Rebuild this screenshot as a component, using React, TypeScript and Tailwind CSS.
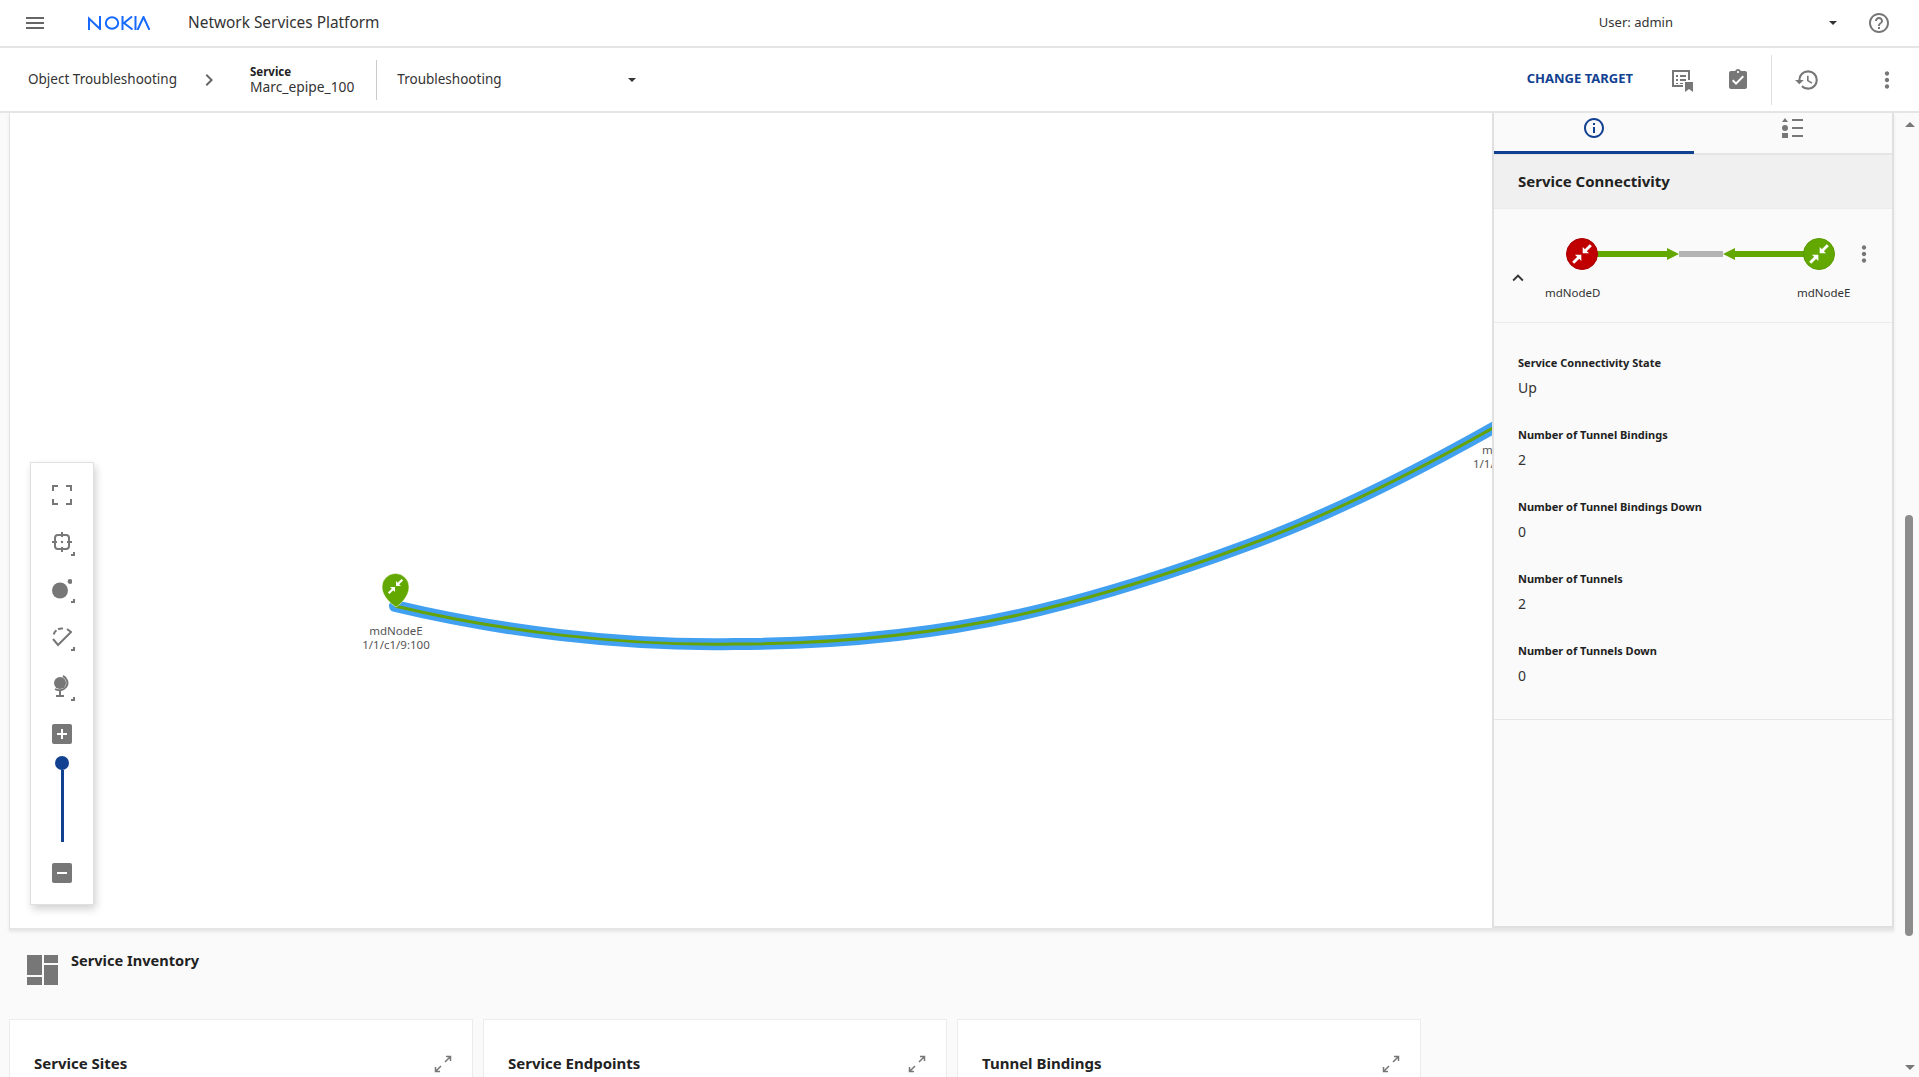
import { MdAssignmentTurnedIn, MdHelpOutline, MdHistory, MdInfoOutline, MdMoreVert, MdMenu, MdExpandLess, MdChevronRight } from "react-icons/md";

const font = { fontFamily: '"Noto Sans", sans-serif' };

const linkPath = "M385 493 C 490 518, 610 533, 724 531 C 826 531, 928 522, 1030 497 C 1100 480, 1168 458, 1238 432 C 1320 402, 1400 362, 1490 311";

function Caret({ className = "" }: { className?: string }) {
    return <span className={`w-0 h-0 border-x-[4px] border-x-transparent border-t-[4px] border-t-[#333] ${className}`} />;
}

function NokiaLogo() {
    return (
        <svg width="62" height="14" viewBox="0 0 62 14" fill="none" stroke="#1769ff" strokeWidth="2">
            <path d="M1 14V2.5L12 13V0" />
            <ellipse cx="24" cy="7" rx="6.2" ry="5.8" />
            <path d="M34.5 0v14M44 0.5L36 7l8.5 6.5" />
            <path d="M47.5 0v14" />
            <path d="M49.5 14L55.5 1l6 13" />
        </svg>
    );
}

function ConnectArrows({ size = 20 }: { size?: number }) {
    return (
        <svg width={size} height={size} viewBox="0 0 20 20" fill="none">
            <path d="M18 2l-6 6" stroke="#fff" strokeWidth="2.6" />
            <path d="M10.6 3.6v5.8h5.8z" fill="#fff" />
            <path d="M2 18l6-6" stroke="#fff" strokeWidth="2.6" />
            <path d="M9.4 16.4v-5.8H3.6z" fill="#fff" />
        </svg>
    );
}

function Corner() {
    return <span className="absolute right-[-3px] bottom-[-4px] w-[4px] h-[4px] border-r-2 border-b-2 border-[#777]" />;
}

function MapControls() {
    return (
        <div className="absolute left-[20px] top-[349px] w-[64px] h-[443px] bg-white border border-[#e0e0e0] shadow-[2px_4px_8px_rgba(0,0,0,0.18)] flex flex-col items-center pt-[22px]">
            <svg width="20" height="20" viewBox="0 0 20 20" fill="none" stroke="#777" strokeWidth="2">
                <path d="M1 6V1h5M14 1h5v5M19 14v5h-5M6 19H1v-5" />
            </svg>
            <div className="relative mt-[27px]">
                <svg width="20" height="20" viewBox="0 0 20 20" fill="none" stroke="#777" strokeWidth="2">
                    <rect x="3" y="3" width="14" height="14" rx="3" />
                    <path d="M10 0v5M10 15v5M0 10h5M15 10h5" />
                    <circle cx="10" cy="10" r="1.2" fill="#777" stroke="none" />
                </svg>
                <Corner />
            </div>
            <div className="relative mt-[27px]">
                <svg width="20" height="20" viewBox="0 0 20 20" fill="#777">
                    <circle cx="8" cy="11.5" r="8" />
                    <circle cx="18" cy="2.5" r="2.4" />
                </svg>
                <Corner />
            </div>
            <div className="relative mt-[28px]">
                <svg width="20" height="20" viewBox="0 0 20 20" fill="none" stroke="#777" strokeWidth="2">
                    <path d="M1 12l5 6L19 5l-4-3" />
                    <path d="M11 1.5C6 1 2 4 1.5 9" strokeDasharray="5 2" />
                </svg>
                <Corner />
            </div>
            <div className="relative mt-[28px]">
                <svg width="20" height="22" viewBox="0 0 20 22" fill="none" stroke="#777" strokeWidth="2">
                    <circle cx="8" cy="8" r="6" fill="#777" stroke="none" />
                    <path d="M11 1c4 2 6 7 3 11s-8 4-11 2" />
                    <path d="M8 16v4M4 21h8" />
                </svg>
                <Corner />
            </div>
            <span className="mt-[27px] w-[20px] h-[20px] rounded-[2px] bg-[#777] text-white flex items-center justify-center">
                <span className="relative w-[10px] h-[10px] before:absolute before:left-0 before:top-[4px] before:w-[10px] before:h-[2px] before:bg-white after:absolute after:left-[4px] after:top-0 after:w-[2px] after:h-[10px] after:bg-white" />
            </span>
            <span className="mt-[12px] w-[14px] h-[14px] rounded-full bg-[#124191]" />
            <span className="w-[3px] h-[72px] bg-[#124191]" />
            <span className="mt-[21px] w-[20px] h-[20px] rounded-[2px] bg-[#777] flex items-center justify-center">
                <span className="w-[10px] h-[2px] bg-white" />
            </span>
        </div>
    );
}

function TopologyCanvas() {
    return (
        <div className="relative flex-1 bg-white overflow-hidden">
            <svg className="absolute inset-0" width="1484" height="816" fill="none">
                <path d={linkPath} stroke="#42a0f0" strokeWidth="12" strokeLinecap="round" />
                <path d={linkPath} stroke="#64a30a" strokeWidth="3" />
                <path d="M386 494c-5-3-14-11-14-20a13.5 13.5 0 0 1 27 0c0 9-8 17-13 20z" fill="#62a800" stroke="#fff" strokeWidth="0.5" />
            </svg>
            <span className="absolute left-[377px] top-[465px]"><ConnectArrows size={17} /></span>
            <div className="absolute left-[336px] top-[511px] w-[100px] text-center text-[11.5px] leading-[14px] text-[#555]">
                <div>mdNodeE</div>
                <div>1/1/c1/9:100</div>
            </div>
            <div className="absolute left-[1463px] top-[330px] text-[11.5px] leading-[14px] text-[#555] whitespace-nowrap">
                <div className="pl-[9px]">mdNodeD</div>
                <div>1/1/c1/9:100</div>
            </div>
            <MapControls />
        </div>
    );
}

function Prop({ label, value }: { label: string; value: string }) {
    return (
        <div className="h-[72px]">
            <div className="text-[11px] leading-[16px] font-bold text-[#222]">{label}</div>
            <div className="mt-[7px] text-[14px] leading-[20px] text-[#333]">{value}</div>
        </div>
    );
}

function SidePanel() {
    return (
        <div className="relative z-10 w-[402px] bg-[#fafafa] border-l-2 border-r-2 border-b-2 border-[#e0e0e0] flex flex-col">
            <div className="h-[42px] flex border-b-2 border-[#e5e5e5]">
                <div className="w-[201px] h-[41px] border-b-[3px] border-[#124191] pb-[8px] flex items-center justify-center">
                    <MdInfoOutline size={24} color="#124191" />
                </div>
                <div className="w-[200px] h-[41px] pb-[11px] flex items-center justify-center">
                    <svg width="22" height="20" viewBox="0 0 22 20" fill="#777">
                        <path d="M3 0l3 4H0zM0 15h6v5H0z" />
                        <circle cx="3" cy="10" r="3" />
                        <path d="M10 1h11v2H10zM10 9h11v2H10zM10 17h11v2H10z" />
                    </svg>
                </div>
            </div>
            <div className="h-[53px] bg-[#f0f0f0] pl-[24px] flex items-center text-[15px] font-bold text-[#222]">Service Connectivity</div>
            <div className="relative h-[115px] border-b border-t border-[#ececec]">
                <MdExpandLess className="absolute left-[13px] top-[58px]" size={22} color="#333" />
                <div className="absolute left-[72px] top-[29px] flex items-center">
                    <span className="w-[32px] h-[32px] rounded-full bg-[#c00000] border border-[#a00] flex items-center justify-center z-10"><ConnectArrows size={22} /></span>
                    <span className="w-[70px] h-[6px] bg-[#62a800] -ml-[1px]" />
                    <span className="w-0 h-0 border-y-[6px] border-y-transparent border-l-[12px] border-l-[#62a800]" />
                    <span className="w-[44px] h-[6px] bg-[#b3b3b3]" />
                    <span className="w-0 h-0 border-y-[6px] border-y-transparent border-r-[12px] border-r-[#62a800]" />
                    <span className="w-[69px] h-[6px] bg-[#62a800] -mr-[1px]" />
                    <span className="w-[32px] h-[32px] rounded-full bg-[#62a800] border border-[#5a9a00] flex items-center justify-center z-10"><ConnectArrows size={22} /></span>
                </div>
                <MdMoreVert className="absolute left-[357px] top-[32px]" size={26} color="#777" />
                <div className="absolute left-[51px] top-[76px] text-[11.5px] leading-[16px] text-[#333]">mdNodeD</div>
                <div className="absolute left-[303px] top-[76px] text-[11.5px] leading-[16px] text-[#333]">mdNodeE</div>
            </div>
            <div className="pl-[24px] pt-[32px] h-[397px] border-b border-[#e5e5e5]">
                <Prop label="Service Connectivity State" value="Up" />
                <Prop label="Number of Tunnel Bindings" value="2" />
                <Prop label="Number of Tunnel Bindings Down" value="0" />
                <Prop label="Number of Tunnels" value="2" />
                <Prop label="Number of Tunnels Down" value="0" />
            </div>
        </div>
    );
}

function InventoryCard({ title }: { title: string }) {
    return (
        <div className="w-[464px] h-[80px] bg-white border border-[#ececec] pt-[32px] pl-[24px] pr-[20px] flex justify-between">
            <span className="text-[15px] leading-[22px] font-bold text-[#222]">{title}</span>
            <svg width="18" height="18" viewBox="0 0 18 18" fill="none" stroke="#777" strokeWidth="1.5" className="mt-[3px]">
                <path d="M11 7l5-5M12 1.5h4.5V6M7 11l-5 5M6 16.5H1.5V12" />
            </svg>
        </div>
    );
}

export default function App() {
    return (
        <div className="h-screen overflow-hidden flex flex-col bg-[#fafafa] text-[#333]" style={font}>
            <header className="h-[48px] shrink-0 bg-white border-b-2 border-[#e5e5e5] flex items-center">
                <MdMenu className="ml-[23px]" size={24} color="#666" />
                <span className="ml-[41px]"><NokiaLogo /></span>
                <span className="ml-[38px] text-[15.4px] text-[#333]">Network Services Platform</span>
                <span className="ml-auto text-[13px] text-[#333]">User: admin</span>
                <Caret className="ml-[156px]" />
                <MdHelpOutline className="ml-[30px] mr-[28px]" size={24} color="#777" />
            </header>
            <div className="h-[65px] shrink-0 bg-white border-b-2 border-[#e5e5e5] flex items-center">
                <span className="ml-[28px] -mt-[1px] text-[13.5px]">Object Troubleshooting</span>
                <MdChevronRight className="ml-[20px]" size={24} color="#666" />
                <div className="ml-[29px] flex flex-col">
                    <span className="text-[11.5px] leading-[13px] font-bold text-[#222]">Service</span>
                    <span className="text-[13.8px] leading-[17px]">Marc_epipe_100</span>
                </div>
                <span className="ml-[22px] w-px h-[40px] bg-[#ccc]" />
                <span className="ml-[20px] -mt-[1px] text-[13.5px] w-[231px]">Troubleshooting</span>
                <Caret className="mt-[1px]" />
                <span className="ml-auto -mt-[1px] text-[13px] font-bold text-[#124191]">CHANGE TARGET</span>
                <svg className="ml-[37px]" width="24" height="24" viewBox="0 0 24 24" fill="#777">
                    <path d="M2 2h18v10h-2V4H4v13h9v2H2z" />
                    <path d="M6 7h2v2H6zM10 7h6v2h-6zM6 11h2v2H6zM10 11h6v2h-6zM6 15h2v1H6zM10 15h3v1h-3zM15 14h8v10l-4-3-4 3z" />
                </svg>
                <MdAssignmentTurnedIn className="ml-[32px]" size={24} color="#777" />
                <span className="ml-[21px] w-px h-[50px] bg-[#ddd]" />
                <MdHistory className="ml-[22px]" size={26} color="#777" />
                <MdMoreVert className="ml-[54px] mr-[19px]" size={26} color="#777" />
            </div>
            <div className="flex-1 min-h-0 flex">
                <main className="flex-1 min-w-0 pl-[9px] pr-[6px]">
                    <div className="h-[817px] flex border-b-2 border-l border-[#e5e5e5] shadow-[0_2px_3px_rgba(0,0,0,0.08)]">
                        <TopologyCanvas />
                        <SidePanel />
                    </div>
                    <div className="h-[89px] flex pl-[18px] pt-[25px]">
                        <svg width="31" height="30" viewBox="0 0 31 30" fill="#777">
                            <path d="M0 0h15v20H0zM17 0h14v8H17zM17 10h14v20H17zM0 22h15v8H0z" />
                        </svg>
                        <span className="ml-[13px] -mt-[5px] text-[14.6px] leading-[20px] font-bold text-[#222]">Service Inventory</span>
                    </div>
                    <div className="flex gap-[10px]">
                        <InventoryCard title="Service Sites" />
                        <InventoryCard title="Service Endpoints" />
                        <InventoryCard title="Tunnel Bindings" />
                    </div>
                </main>
                <div className="relative w-[19px] shrink-0 bg-[#fafafa] flex flex-col items-center justify-between pt-[9px] pb-[7px]">
                    <span className="w-0 h-0 border-x-[5px] border-x-transparent border-b-[5px] border-b-[#777]" />
                    <span className="absolute left-[5px] top-[402px] w-[8px] h-[421px] rounded-[4px] bg-[#8c8c8c]" />
                    <span className="w-0 h-0 border-x-[5px] border-x-transparent border-t-[5px] border-t-[#777]" />
                </div>
            </div>
        </div>
    );
}
